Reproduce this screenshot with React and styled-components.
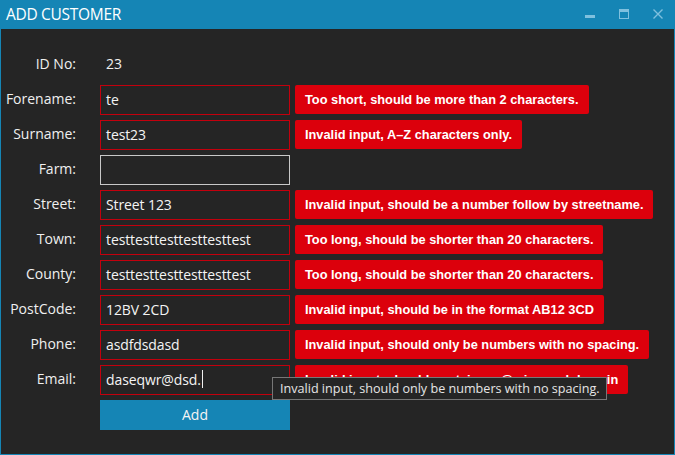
import React from "react";
import styled, { createGlobalStyle } from "styled-components";

const Global = createGlobalStyle`
  html, body { margin: 0; padding: 0; background: #252525; }
  body { width: 675px; height: 455px; overflow: hidden; }
`;

const Window = styled.div`
  box-sizing: border-box;
  width: 675px;
  height: 455px;
  border: 1px solid #1585b5;
  border-top-color: #1d92c6;
  background: #252525;
  display: flex;
  flex-direction: column;
  position: relative;
  font-family: "Open Sans", "Noto Sans", sans-serif;
`;

const TitleBar = styled.div`
  height: 29px;
  background: #1585b5;
  display: flex;
  align-items: center;
  padding-left: 6px;
  margin: -1px -1px 0 -1px;
  padding-bottom: 1px;
  box-sizing: border-box;
`;

const Title = styled.div`
  flex: 1;
  color: #ffffff;
  font-size: 15.5px;
  font-weight: 400;
  letter-spacing: -0.3px;
`;

const Controls = styled.div`
  display: flex;
  align-items: center;
  height: 100%;
`;

const CtrlBtn = styled.div`
  width: 34px;
  height: 100%;
  display: flex;
  align-items: center;
  justify-content: center;
`;

const Form = styled.div`
  display: grid;
  grid-template-columns: 99px 190px 1fr;
  grid-auto-rows: 30px;
  row-gap: 5px;
  padding-top: 21px;
`;

const Label = styled.div`
  grid-column: 1;
  display: flex;
  align-items: center;
  justify-content: flex-end;
  padding-right: 24px;
  padding-bottom: 3px;
  color: #f0f0f0;
  font-size: 14px;
`;

const Value = styled.div`
  grid-column: 2;
  display: flex;
  align-items: center;
  padding-left: 6px;
  padding-bottom: 3px;
  color: #f0f0f0;
  font-size: 14px;
`;

const Field = styled.div`
  grid-column: 2;
  box-sizing: border-box;
  height: 30px;
  border: 1px solid ${(p) => (p.$invalid ? "#c4000d" : "#c8c8c8")};
  display: flex;
  align-items: center;
  padding-left: 5px;
  padding-bottom: 2px;
  color: #f4f4f4;
  font-size: 14px;
  letter-spacing: -0.1px;
  white-space: nowrap;
`;

const Caret = styled.span`
  display: inline-block;
  width: 1px;
  height: 18px;
  background: #f0f0f0;
  margin-left: 1px;
`;

const ErrorCell = styled.div`
  grid-column: 3;
  display: flex;
  align-items: center;
  padding-left: 5px;
`;

const ErrorTag = styled.div`
  box-sizing: border-box;
  height: 29px;
  background: #dc000c;
  border-radius: 2px;
  color: #ffffff;
  font-family: "Liberation Sans", Arial, sans-serif;
  font-weight: 700;
  font-size: 12.8px;
  display: flex;
  align-items: center;
  padding: 0 10px 1px 10px;
  white-space: nowrap;
  margin-top: -1px;
`;

const AddButton = styled.div`
  grid-column: 2;
  background: #1585b5;
  color: #f4f4f4;
  font-size: 14px;
  display: flex;
  align-items: center;
  justify-content: center;
  padding-bottom: 2px;
`;

const Tooltip = styled.div`
  position: absolute;
  left: 271px;
  top: 376px;
  height: 23px;
  box-sizing: border-box;
  border: 1px solid #777777;
  background: #252525;
  color: #e6e6e6;
  font-size: 12.6px;
  padding: 0 6px 1px 7px;
  display: flex;
  align-items: center;
  white-space: nowrap;
`;

const rows = [
  { label: "Forename:", value: "te", error: "Too short, should be more than 2 characters." },
  { label: "Surname:", value: "test23", error: "Invalid input, A–Z characters only." },
  { label: "Farm:", value: "", error: null },
  { label: "Street:", value: "Street 123", error: "Invalid input, should be a number follow by streetname." },
  { label: "Town:", value: "testtesttesttesttesttest", error: "Too long, should be shorter than 20 characters." },
  { label: "County:", value: "testtesttesttesttesttest", error: "Too long, should be shorter than 20 characters." },
  { label: "PostCode:", value: "12BV 2CD", error: "Invalid input, should be in the format AB12 3CD" },
  { label: "Phone:", value: "asdfdsdasd", error: "Invalid input, should only be numbers with no spacing." },
  { label: "Email:", value: "daseqwr@dsd.", error: "Invalid input, should contain an @ sign and domain", caret: true },
];

const ctrlColor = "#7fc0de";

export default function App() {
  return (
    <>
      <Global />
      <Window>
        <TitleBar>
          <Title>ADD CUSTOMER</Title>
          <Controls>
            <CtrlBtn>
              <svg width="10" height="10" viewBox="0 0 10 10">
                <rect x="0" y="6" width="10" height="3" fill={ctrlColor} />
              </svg>
            </CtrlBtn>
            <CtrlBtn>
              <svg width="10" height="10" viewBox="0 0 10 10">
                <rect x="0.5" y="0.5" width="9" height="9" fill="none" stroke={ctrlColor} strokeWidth="1" />
                <rect x="0" y="0" width="10" height="3" fill={ctrlColor} />
              </svg>
            </CtrlBtn>
            <CtrlBtn>
              <svg width="10" height="10" viewBox="0 0 10 10">
                <path d="M0.5 0.5 L9.5 9.5 M9.5 0.5 L0.5 9.5" stroke={ctrlColor} strokeWidth="1.4" />
              </svg>
            </CtrlBtn>
          </Controls>
        </TitleBar>
        <Form>
          <Label>ID No:</Label>
          <Value>23</Value>
          <div />
          {rows.map((r) => (
            <React.Fragment key={r.label}>
              <Label>{r.label}</Label>
              <Field $invalid={!!r.error}>
                {r.value}
                {r.caret && <Caret />}
              </Field>
              <ErrorCell>{r.error && <ErrorTag>{r.error}</ErrorTag>}</ErrorCell>
            </React.Fragment>
          ))}
          <div />
          <AddButton>Add</AddButton>
        </Form>
        <Tooltip>Invalid input, should only be numbers with no spacing.</Tooltip>
      </Window>
    </>
  );
}
